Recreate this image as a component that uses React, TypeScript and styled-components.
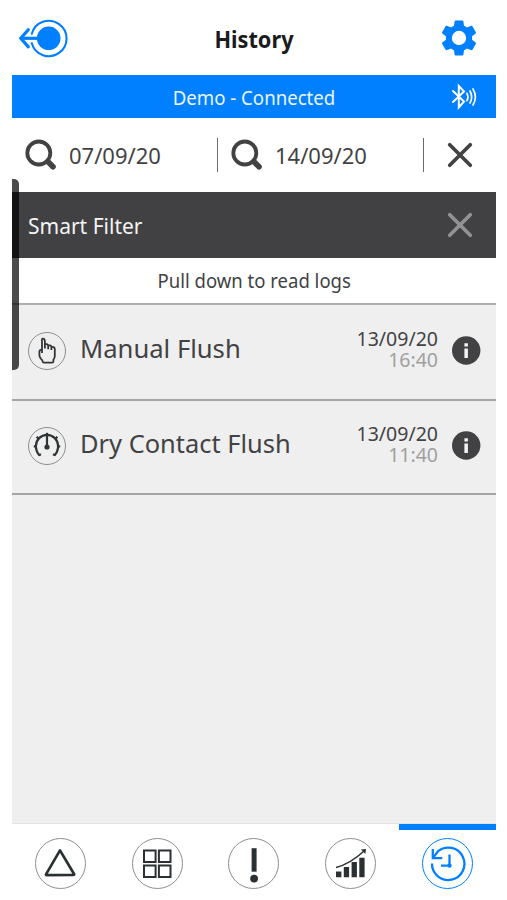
import React from "react";
import styled, { createGlobalStyle } from "styled-components";

const blue = "#0080ff";
const dark = "#424244";

const GlobalStyle = createGlobalStyle`
  * { box-sizing: border-box; }
  body { margin: 0; background: #fff; font-family: "Noto Sans", "Open Sans", sans-serif; color: ${dark}; }
  svg { display: block; flex: none; overflow: visible; }
`;

const Screen = styled.main`
  position: relative;
  display: flex;
  flex-direction: column;
  width: 484px;
  height: 900px;
  margin-left: 12px;
  overflow: hidden;
`;

const Label = styled.span<{ $size: number; $stretch?: number; $origin?: string; $color?: string; $weight?: number; $leading?: number }>`
  display: block;
  margin: 0;
  white-space: nowrap;
  font-size: ${(p) => p.$size}px;
  line-height: ${(p) => p.$leading ?? 1.2};
  font-weight: ${(p) => p.$weight ?? 400};
  color: ${(p) => p.$color ?? dark};
  transform: scaleX(${(p) => p.$stretch ?? 1});
  transform-origin: ${(p) => p.$origin ?? "left"} center;
`;

const Header = styled.header`
  display: grid;
  grid-template-columns: 52px 1fr 52px;
  align-items: center;
  justify-items: center;
  height: 75px;
  padding: 1px 11px 0 5px;
`;

const Title = styled.div`
  padding: 2px 0 0 6px;
`;

const Status = styled.div`
  display: grid;
  grid-template-columns: 40px 1fr 40px;
  align-items: center;
  justify-items: center;
  height: 43px;
  padding: 3px 12px 0;
  background: ${blue};

  svg { margin-top: -2px; }
`;

const Search = styled.div`
  display: flex;
  align-items: center;
  height: 74px;
`;

const DateField = styled.div`
  display: flex;
  align-items: center;
  gap: 12px;
  width: 206px;
  height: 34px;
  padding-left: 13px;
  border-right: 1.5px solid #6b6b6b;
`;

const Clear = styled.div`
  display: flex;
  flex: 1;
  justify-content: center;
`;

const Filter = styled.div`
  display: flex;
  align-items: center;
  justify-content: space-between;
  height: 66px;
  padding: 3px 23px 0 16px;
  background: #414143;

  svg { margin-top: -4px; }
`;

const Hint = styled.div`
  display: flex;
  justify-content: center;
  align-items: center;
  height: 47px;
  padding-top: 2px;
  border-bottom: 2px solid #acafae;
`;

const List = styled.div`
  flex: 1;
  background: #efefef;
`;

const Row = styled.div<{ $height: number }>`
  display: flex;
  align-items: center;
  height: ${(p) => p.$height}px;
  padding: 0 15px 3px 16px;
  border-bottom: 2px solid #a5a5a5;
`;

const RowTitle = styled.div`
  flex: 1;
  padding: 0 0 3px 14px;
`;

const Stamp = styled.div`
  display: flex;
  flex-direction: column;
  align-items: flex-end;
  margin-right: 14px;
  padding-bottom: 3px;
`;

const Round = styled.div<{ $size: number; $color?: string }>`
  display: flex;
  align-items: center;
  justify-content: center;
  flex: none;
  width: ${(p) => p.$size}px;
  height: ${(p) => p.$size}px;
  border: 1.4px solid ${(p) => p.$color ?? "#8e8e8e"};
  border-radius: 50%;
`;

const Nav = styled.nav`
  display: grid;
  grid-template-columns: repeat(5, 1fr);
  height: 77px;
  border-top: 1px solid #e3e3e3;
`;

const Tab = styled.div<{ $active?: boolean }>`
  display: flex;
  justify-content: center;
  padding-top: 8px;
  border-top: 6px solid ${(p) => (p.$active ? blue : "transparent")};
`;

const ScrollThumb = styled.div`
  position: absolute;
  left: 0;
  top: 179px;
  width: 6.5px;
  height: 191px;
  border-radius: 0 5px 5px 0;
  background: rgba(0, 0, 0, 0.7);
`;

const BackIcon = () => (
  <svg width="50" height="40" viewBox="0 0 50 40" fill="none" stroke={blue}>
    <path d="M12.8 15.8H13.8A17.7 17.7 0 1 1 13.8 25.2H12.8" strokeWidth="2.1" />
    <circle cx="30.7" cy="20.3" r="11.8" fill={blue} stroke="none" />
    <path d="M3 20.3H24" strokeWidth="3.2" />
    <path d="M10.3 11.7L2.8 20.3L10.3 28.9" strokeWidth="3.2" strokeLinecap="round" />
  </svg>
);

const GearIcon = () => (
  <svg width="42" height="42" viewBox="0 0 24 24" fill={blue}>
    <path d="M19.43 12.98c.04-.32.07-.64.07-.98s-.03-.66-.07-.98l2.11-1.65c.19-.15.24-.42.12-.64l-2-3.46c-.12-.22-.39-.3-.61-.22l-2.49 1c-.52-.4-1.08-.73-1.69-.98l-.38-2.65C14.46 2.18 14.25 2 14 2h-4c-.25 0-.46.18-.49.42l-.38 2.65c-.61.25-1.17.59-1.69.98l-2.49-1c-.23-.09-.49 0-.61.22l-2 3.46c-.13.22-.07.49.12.64l2.11 1.65c-.04.32-.07.65-.07.98s.03.66.07.98l-2.11 1.65c-.19.15-.24.42-.12.64l2 3.46c.12.22.39.3.61.22l2.49-1c.52.4 1.08.73 1.69.98l.38 2.65c.03.24.24.42.49.42h4c.25 0 .46-.18.49-.42l.38-2.65c.61-.25 1.17-.59 1.69-.98l2.49 1c.23.09.49 0 .61-.22l2-3.46c.12-.22.07-.49-.12-.64l-2.11-1.65zM12 16.1a4.1 4.1 0 1 1 0-8.2 4.1 4.1 0 0 1 0 8.2z" />
  </svg>
);

const BluetoothIcon = () => (
  <svg width="26" height="26" viewBox="0 0 26 26" fill="none" stroke="#fff" strokeWidth="2" strokeLinecap="round">
    <path d="M2 7L13 17.5L7.8 23.3V2L13 7.5L2 18" />
    <path d="M16 9.3Q18 13 16 16.7M19 7Q22.3 13 19 19M22 5Q26.8 13 22 21" strokeWidth="1.7" />
  </svg>
);

const SearchIcon = () => (
  <svg width="32" height="32" viewBox="0 0 32 32" fill="none" stroke={dark}>
    <circle cx="13.8" cy="14" r="11.5" strokeWidth="3.8" />
    <path d="M22.8 22.5L28 27.7" strokeWidth="5.6" strokeLinecap="round" />
  </svg>
);

const CrossIcon = ({ color }: { color: string }) => (
  <svg width="26" height="26" viewBox="0 0 26 26" stroke={color} strokeWidth="3.7" strokeLinecap="round">
    <path d="M2.7 2.7L23.3 23.3M23.3 2.7L2.7 23.3" />
  </svg>
);

const HandIcon = () => (
  <svg width="36" height="36" viewBox="0 0 36 36" fill="none" stroke="#333638" strokeWidth="1.8" strokeLinejoin="round">
    <path d="M13 20V8Q12.4 5.7 14 5.6Q15.6 5.7 15.9 8V15.5M15.9 11.4Q19.2 10.6 19.2 13V16.2M19.2 12.6Q22.4 11.8 22.4 14.2V17M22.4 13.9Q25.8 13.4 25.8 16V23Q25.8 25 24.4 26.8V28.5Q24.4 29.6 23.2 29.6H14.8Q13.8 29.6 13.6 28.3Q13.3 26.9 11.8 25.6Q10.4 24 10.4 22V18.3Q10.8 16.5 13 16.3" />
  </svg>
);

const GaugeIcon = () => (
  <svg width="36" height="36" viewBox="0 0 36 36" fill="none" stroke="#2f3436" strokeWidth="2.2">
    <path d="M10.6 27.6Q6.9 23.5 6.9 18A11.1 11.1 0 0 1 29.1 18Q29.1 23.5 25.4 27.6" />
    <path d="M18 4.8V19" />
    <path d="M4.8 18.3H8M28 18.3H31.2M7.6 8.8L10.2 11.4M28.4 8.8L25.8 11.4" />
    <circle cx="18" cy="19" r="2.6" fill="#2f3436" stroke="none" />
    <path d="M9.8 27.2L12 26.2M26.2 27.2L24 26.2" />
  </svg>
);

const InfoIcon = () => (
  <svg width="29" height="29" viewBox="0 0 29 29">
    <circle cx="14.2" cy="14.5" r="14.2" fill={dark} />
    <path d="M12.4 7.3h3.5v3.2h-3.5zM12.4 12.5h3.5v9.4h-3.5z" fill="#f4f4f4" />
  </svg>
);

const ink = "#2b3133";

const TriangleIcon = () => (
  <svg width="48" height="48" viewBox="0 0 48 48" fill="none" stroke={ink} strokeWidth="2.7" strokeLinejoin="round">
    <path d="M24 10.4L38.2 34.2Q38.2 34.8 37.4 34.8L10.6 35.2Q9.8 35.2 10 34.4Z" />
  </svg>
);

const GridIcon = () => (
  <svg width="48" height="48" viewBox="0 0 48 48" fill="none" stroke={ink} strokeWidth="2">
    <path d="M11 10.5H22.6V22.1H11zM25.9 10.5H37.5V22.1H25.9zM11 25.5H22.6V37.1H11zM25.9 25.5H37.5V37.1H25.9z" />
  </svg>
);

const AlertIcon = () => (
  <svg width="48" height="48" viewBox="0 0 48 48" fill={ink}>
    <path d="M21.6 8.2h5v23.5h-5z" />
    <circle cx="24.1" cy="38.6" r="3.9" />
  </svg>
);

const ChartIcon = () => (
  <svg width="48" height="48" viewBox="0 0 48 48" fill={ink}>
    <path d="M9 31.5h5.4v5.8H9zM16.8 27h5.3v10.3h-5.3zM24.6 22h5.3v15.3h-5.3zM32.3 17.8h5.3v19.5h-5.3z" />
    <path d="M9 27.5Q23 24 37 11" fill="none" stroke={ink} strokeWidth="1.5" />
    <path d="M34 9.4L39 9L38.4 14Z" />
  </svg>
);

const HistoryIcon = () => (
  <svg width="48" height="48" viewBox="0 0 48 48" fill="none" stroke={blue} strokeWidth="2.3">
    <path d="M8 23.5A16.2 16.2 0 1 0 14 11.2L9.2 17.6" />
    <path d="M8.8 9V18.2H18.3" />
    <path d="M25.5 14.5V25.7H17" />
    <circle cx="25.5" cy="25.6" r="2.2" fill={blue} stroke="none" />
  </svg>
);

const logs = [
  { title: "Manual Flush", time: "16:40", icon: <HandIcon />, height: 96, stretch: 0.985 },
  { title: "Dry Contact Flush", time: "11:40", icon: <GaugeIcon />, height: 94, stretch: 0.978 },
];

const tabs = [<TriangleIcon />, <GridIcon />, <AlertIcon />, <ChartIcon />, <HistoryIcon />];

export default function App() {
  return (
    <>
      <GlobalStyle />
      <Screen>
        <Header>
          <BackIcon />
          <Title>
            <Label as="h1" $size={22.5} $weight={700} $color="#1b1b1d" $origin="center" $stretch={0.965}>History</Label>
          </Title>
          <GearIcon />
        </Header>
        <Status>
          <span />
          <Label $size={19} $color="#eaf5ff" $origin="center" $stretch={0.98}>Demo - Connected</Label>
          <BluetoothIcon />
        </Status>
        <Search>
          <DateField><SearchIcon /><Label $size={22}>07/09/20</Label></DateField>
          <DateField><SearchIcon /><Label $size={22}>14/09/20</Label></DateField>
          <Clear><CrossIcon color={dark} /></Clear>
        </Search>
        <Filter>
          <Label $size={21} $color="#f5f5f5">Smart Filter</Label>
          <CrossIcon color="#929292" />
        </Filter>
        <Hint><Label $size={19} $origin="center" $stretch={0.975}>Pull down to read logs</Label></Hint>
        <List>
          {logs.map((log) => (
            <Row key={log.title} $height={log.height}>
              <Round $size={38}>{log.icon}</Round>
              <RowTitle><Label $size={26} $stretch={log.stretch}>{log.title}</Label></RowTitle>
              <Stamp>
                <Label $size={19.5} $origin="right" $leading={1.1}>13/09/20</Label>
                <Label $size={19.5} $color="#a0a0a0" $origin="right" $leading={1.1}>{log.time}</Label>
              </Stamp>
              <InfoIcon />
            </Row>
          ))}
        </List>
        <Nav>
          {tabs.map((icon, i) => (
            <Tab key={i} $active={i === 4}>
              <Round $size={51} $color={i === 4 ? blue : undefined}>{icon}</Round>
            </Tab>
          ))}
        </Nav>
        <ScrollThumb />
      </Screen>
    </>
  );
}
